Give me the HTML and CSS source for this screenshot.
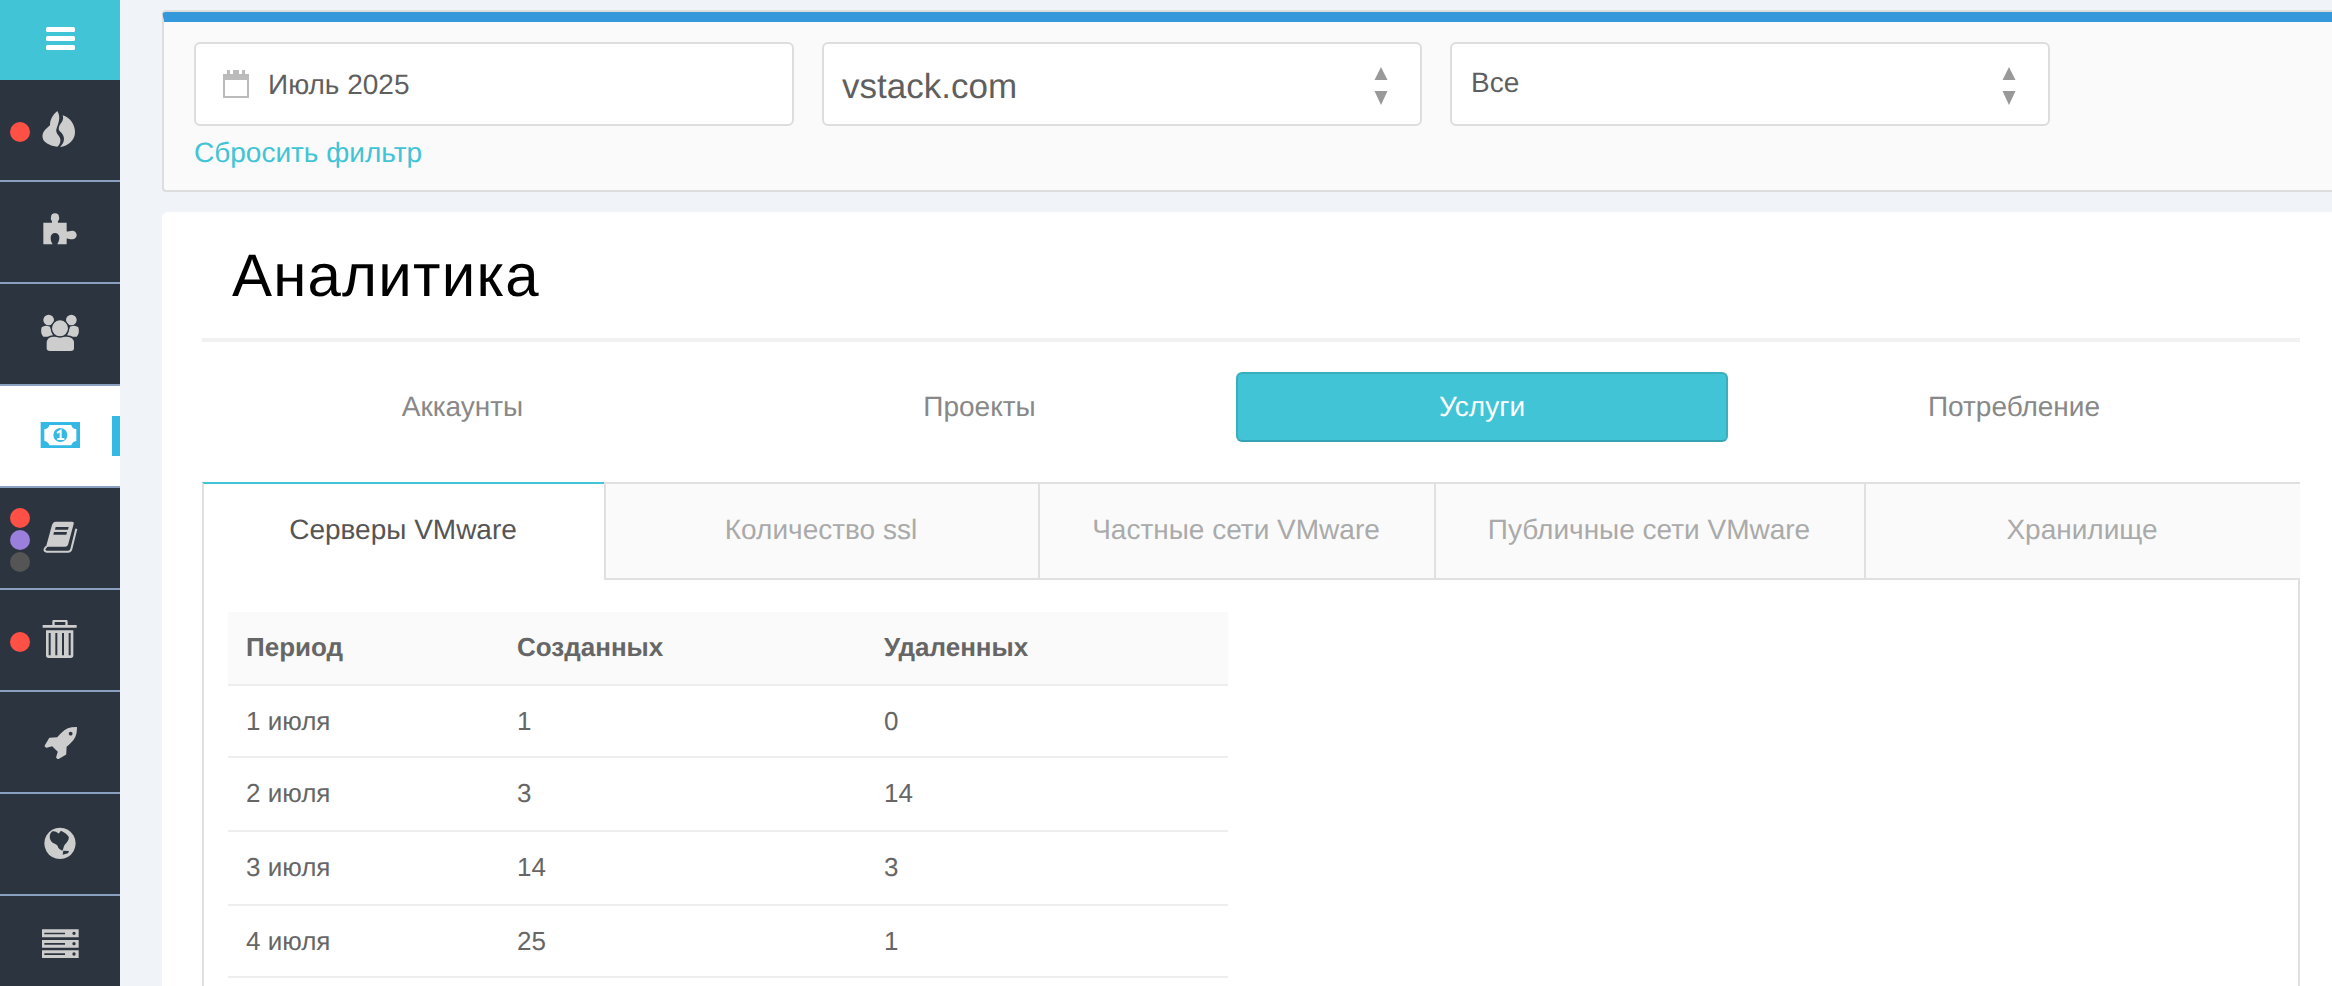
FILE: index.html
```html
<!DOCTYPE html>
<html lang="ru">
<head>
<meta charset="utf-8">
<title>Аналитика</title>
<link rel="stylesheet" href="styles.css">
</head>
<body>
<div class="app">
  <nav class="sidebar">
    <div class="menu-toggle"><span></span><span></span><span></span></div>
    <a class="nav-item">
      <div class="dots"><i class="dot red"></i></div>
      <svg class="ico" width="40" height="40" viewBox="120 330 120 120"><path d="M172 333C158 345 150 358 150 376C136 388 125 398 128 414C131 428 150 438 172 440C182 432 184 420 178 410C172 402 166 396 170 385C174 372 184 352 172 333Z"/><path d="M188 346C210 352 226 375 225 398C224 420 205 438 180 441C192 430 196 415 187 402C182 394 172 392 178 378C183 368 193 362 188 346Z"/></svg>
    </a>
    <a class="nav-item">
      <svg class="ico" width="40" height="40" viewBox="120 636 120 120"><path d="M130 668H156C158 662 150 660 153 652A12 12 0 1 1 177 652C180 660 172 662 174 668H200V694C204 696 206 692 217 692A13 13 0 1 1 217 718C206 718 204 714 200 716V733H172C178 722 178 716 178 712A13 13 0 1 0 152 712C152 718 152 724 158 733H132Q130 733 130 731Z"/></svg>
    </a>
    <a class="nav-item">
      <svg class="ico" width="40" height="40" viewBox="120 942 120 120"><circle cx="146" cy="960" r="16"/><circle cx="214" cy="960" r="16"/><path d="M125 982Q135 974 150 980L160 1010H130Q120 1000 125 982ZM235 982Q225 974 210 980L200 1010H230Q240 1000 235 982Z"/><path class="cut" d="M138 1030Q138 1008 160 1008H200Q224 1008 224 1030V1045Q224 1055 212 1055H150Q138 1055 138 1045Z"/><circle class="cut" cx="180" cy="985" r="26"/></svg>
    </a>
    <a class="nav-item active">
      <svg class="ico money" width="40" height="40" viewBox="120 228 120 120"><path fill-rule="evenodd" d="M122 246H240V324H122ZM148 255Q146 266 133 268V303Q146 305 148 316H214Q216 305 229 303V268Q216 266 214 255Z"/><circle cx="181" cy="285" r="21"/><path class="one" d="M171 279L182 272V296M172 297H193"/></svg>
    </a>
    <a class="nav-item">
      <div class="dots"><i class="dot red"></i><i class="dot violet"></i><i class="dot grey"></i></div>
      <svg class="ico" width="40" height="40" viewBox="120 534 120 120"><path fill-rule="evenodd" d="M158 551Q160 545 167 545H216Q223 545 221 552L205 611Q203 620 195 620H147Q141 620 137 624L156 555ZM167 561L165 569H204L206 561ZM162 576L160 584H199L201 576Z"/><path class="line" d="M139 620Q127 632 140 635H204Q212 635 214 627L229 566"/></svg>
    </a>
    <a class="nav-item">
      <div class="dots"><i class="dot red"></i></div>
      <svg class="ico" width="40" height="40" viewBox="120 840 120 120"><path fill-rule="evenodd" d="M128 855H157V846Q157 838 165 838H195Q203 838 203 846V855H230V863H128ZM164 855H196V846H164ZM138 871H220V946Q220 954 212 954H146Q138 954 138 946ZM146 879V946H152V879ZM166 879V946H172V879ZM186 879V946H192V879ZM206 879V946H212V879Z"/></svg>
    </a>
    <a class="nav-item">
      <svg class="ico" width="33" height="33" viewBox="64 64 1664 1664"><path d="M1504 448q0-40-28-68t-68-28-68 28-28 68 28 68 68 28 68-28 28-68zm224-288q0 249-75.500 430.500T1400 932q-81 80-195 176l-20 379q-2 16-16 26l-384 224q-7 4-16 4-12 0-23-9l-64-64q-13-14-8-32l85-276-281-281-276 85q-3 1-9 1-14 0-23-9l-64-64q-17-19-5-39l224-384q10-14 26-16l379-20q96-114 176-195 188-187 358-258t431-71q14 0 23 9t9 23z"/></svg>
    </a>
    <a class="nav-item">
      <svg class="ico" width="40" height="40" viewBox="120 432 120 120"><path fill-rule="evenodd" d="M180 443A47 47 0 1 1 179.900 443ZM155 455C146 465 148 480 158 488C165 492 170 492 173 498C174 506 182 510 187 512C192 505 190 497 196 492C202 486 208 478 206 470C200 462 192 456 184 453C178 452 180 462 174 460C170 455 162 452 155 455ZM190 512L188 524L204 520L207 513Z"/></svg>
    </a>
    <a class="nav-item">
      <svg class="ico" width="40" height="40" viewBox="120 738 120 120"><path fill-rule="evenodd" d="M126 748H236V772H126ZM133 758V763H195V758ZM222 755A5 5 0 1 0 222.100 765A5 5 0 1 0 222 755ZM126 780H236V803H126ZM133 789V794H195V789ZM222 786A5 5 0 1 0 222.100 796A5 5 0 1 0 222 786ZM126 811H236V834H126ZM133 820V825H195V820ZM222 817A5 5 0 1 0 222.100 827A5 5 0 1 0 222 817Z"/></svg>
    </a>
  </nav>
  <main class="content">
    <section class="filter-panel">
      <div class="filter-row">
        <div class="field date-field">
          <svg class="cal" width="26" height="28" viewBox="0 0 26 28"><path d="M4 0h3v4h3V0h6v4h3V0h3v4h4v24H0V4h4zM2 10v16h22V10z" fill-rule="evenodd"/></svg>
          <span class="date-text">Июль 2025</span>
        </div>
        <div class="field select-field">
          <span class="domain-text">vstack.com</span>
          <svg class="arrows" width="14" height="38" viewBox="0 0 14 38"><path d="M7 0l6.500 13H.5zM7 38L.5 24h13z"/></svg>
        </div>
        <div class="field select-field">
          <span class="all-text">Все</span>
          <svg class="arrows" width="14" height="38" viewBox="0 0 14 38"><path d="M7 0l6.500 13H.5zM7 38L.5 24h13z"/></svg>
        </div>
      </div>
      <a class="reset-link">Сбросить фильтр</a>
    </section>
    <section class="card">
      <h1 class="page-title">Аналитика</h1>
      <div class="pills">
        <a class="pill">Аккаунты</a>
        <a class="pill">Проекты</a>
        <a class="pill active">Услуги</a>
        <a class="pill">Потребление</a>
      </div>
      <div class="tabs">
        <a class="tab active">Серверы VMware</a>
        <a class="tab">Количество ssl</a>
        <a class="tab">Частные сети VMware</a>
        <a class="tab">Публичные сети VMware</a>
        <a class="tab">Хранилище</a>
      </div>
      <div class="tab-body">
        <table class="data">
          <colgroup><col class="c1"><col class="c2"><col class="c3"></colgroup>
          <thead><tr><th>Период</th><th>Созданных</th><th>Удаленных</th></tr></thead>
          <tbody>
            <tr><td>1 июля</td><td>1</td><td>0</td></tr>
            <tr><td>2 июля</td><td>3</td><td>14</td></tr>
            <tr><td>3 июля</td><td>14</td><td>3</td></tr>
            <tr><td>4 июля</td><td>25</td><td>1</td></tr>
          </tbody>
        </table>
      </div>
    </section>
  </main>
</div>
</body>
</html>
```
FILE: styles.css
```css
* { box-sizing: border-box; }
html, body { margin: 0; height: 100%; overflow: hidden; }
body { background: #f0f3f8; font-family: "Liberation Sans", Arial, sans-serif; font-size: 28px; color: #5f5f5f; text-rendering: geometricPrecision; }
.app { display: flex; height: 986px; overflow: hidden; }

.sidebar { width: 120px; flex: none; background: #2c3440; }
.menu-toggle { height: 80px; background: #41c4d6; display: flex; flex-direction: column; align-items: center; gap: 4px; padding-top: 27px; }
.menu-toggle span { display: block; width: 29px; height: 5px; border-radius: 1.5px; background: #fff; }
.nav-item { position: relative; display: flex; align-items: center; justify-content: center; height: 102px; border-bottom: 2px solid #8aa0c0; }
.nav-item.active { background: #fff; }
.nav-item.active::after { content: ""; position: absolute; right: 0; top: 30px; width: 8px; height: 40px; background: #34b8e4; }
.ico { fill: #cdcdcd; flex: none; }
.ico .cut { stroke: #2c3440; stroke-width: 4; }
.ico .line { fill: none; stroke: #cdcdcd; stroke-width: 6; }
.ico.money { fill: #34b8e4; }
.ico .one { fill: none; stroke: #fff; stroke-width: 6; }
.dots { position: absolute; left: 10px; top: 0; bottom: 0; display: flex; flex-direction: column; justify-content: center; gap: 2px; padding-top: 4px; }
.dot { display: block; width: 20px; height: 20px; border-radius: 50%; }
.red { background: #ff5045; }
.violet { background: #9b7fdc; }
.grey { background: #555; }

.content { flex: 1; min-width: 0; padding: 12px 0 0 42px; margin-right: -8px; }
.filter-panel { height: 180px; background: #fafafa; border: 2px solid #ddd; border-right: 0; border-radius: 4px 0 0 4px; border-top: 10px solid #3498db; box-shadow: 0 -2px 0 #ddd; padding: 20px 0 0 30px; }
.filter-row { display: flex; gap: 28px; }
.field { width: 600px; height: 84px; background: #fff; border: 2px solid #ddd; border-radius: 6px; display: flex; align-items: center; }
.date-field { padding-left: 27px; gap: 19px; }
.date-text { padding-top: 2px; }
.cal { fill: #bbb; }
.select-field { padding: 0 32px 0 18px; justify-content: space-between; }
.domain-text { font-size: 35px; padding-top: 5px; }
.all-text { padding: 0 0 3px 1px; }
.arrows { fill: #999; margin-top: 3px; }
.reset-link { display: block; margin-top: 9px; color: #41c4d6; line-height: 36px; }

.card { margin-top: 20px; height: 800px; background: #fff; border-radius: 6px 0 0 0; padding: 0 40px; }
.page-title { margin: 0; height: 130px; border-bottom: 4px solid #f1f1f1; padding: 0 0 0 30px; font-size: 60px; line-height: 128px; letter-spacing: 1.2px; font-weight: 400; color: #000; }
.pills { display: grid; grid-template-columns: 521px 513px 492px 572px; margin-top: 30px; }
.pill { height: 70px; display: flex; align-items: center; justify-content: center; color: #888; border-radius: 6px; }
.pill.active { background: #41c4d6; color: #fff; border: 2px solid #3aaebd; border-bottom-color: #35a3b3; }
.tabs { display: flex; margin-top: 40px; }
.tab { height: 98px; display: flex; align-items: center; justify-content: center; background: #fafafa; color: #aaa; border-top: 2px solid #e0e0e0; border-bottom: 2px solid #e0e0e0; border-left: 2px solid #e0e0e0; padding: 0 2px 2px 0; }
.tab:nth-child(1) { width: 402px; }
.tab:nth-child(2) { width: 434px; }
.tab:nth-child(3) { width: 396px; }
.tab:nth-child(4) { width: 430px; }
.tab:nth-child(5) { width: 436px; }
.tab.active { background: #fff; color: #555; border-top-color: #41c4d6; border-bottom: 0; padding-bottom: 4px; }
.tab-body { height: 500px; border: 2px solid #e0e0e0; border-top: 0; padding: 32px 24px 0; }
.data { width: 1000px; border-collapse: separate; border-spacing: 0; table-layout: fixed; font-size: 26px; color: #666; }
.c1 { width: 271px; }
.c2 { width: 367px; }
.c3 { width: 362px; }
.data th, .data td { padding: 0 18px; text-align: left; }
.data th { height: 74px; background: #fafafa; font-weight: 700; border-bottom: 2px solid #eee; padding-bottom: 2px; }
.data td { height: 72px; border-bottom: 2px solid #eee; }
.data tbody tr:nth-child(2) td, .data tbody tr:nth-child(3) td { height: 74px; padding-bottom: 2px; }
```
